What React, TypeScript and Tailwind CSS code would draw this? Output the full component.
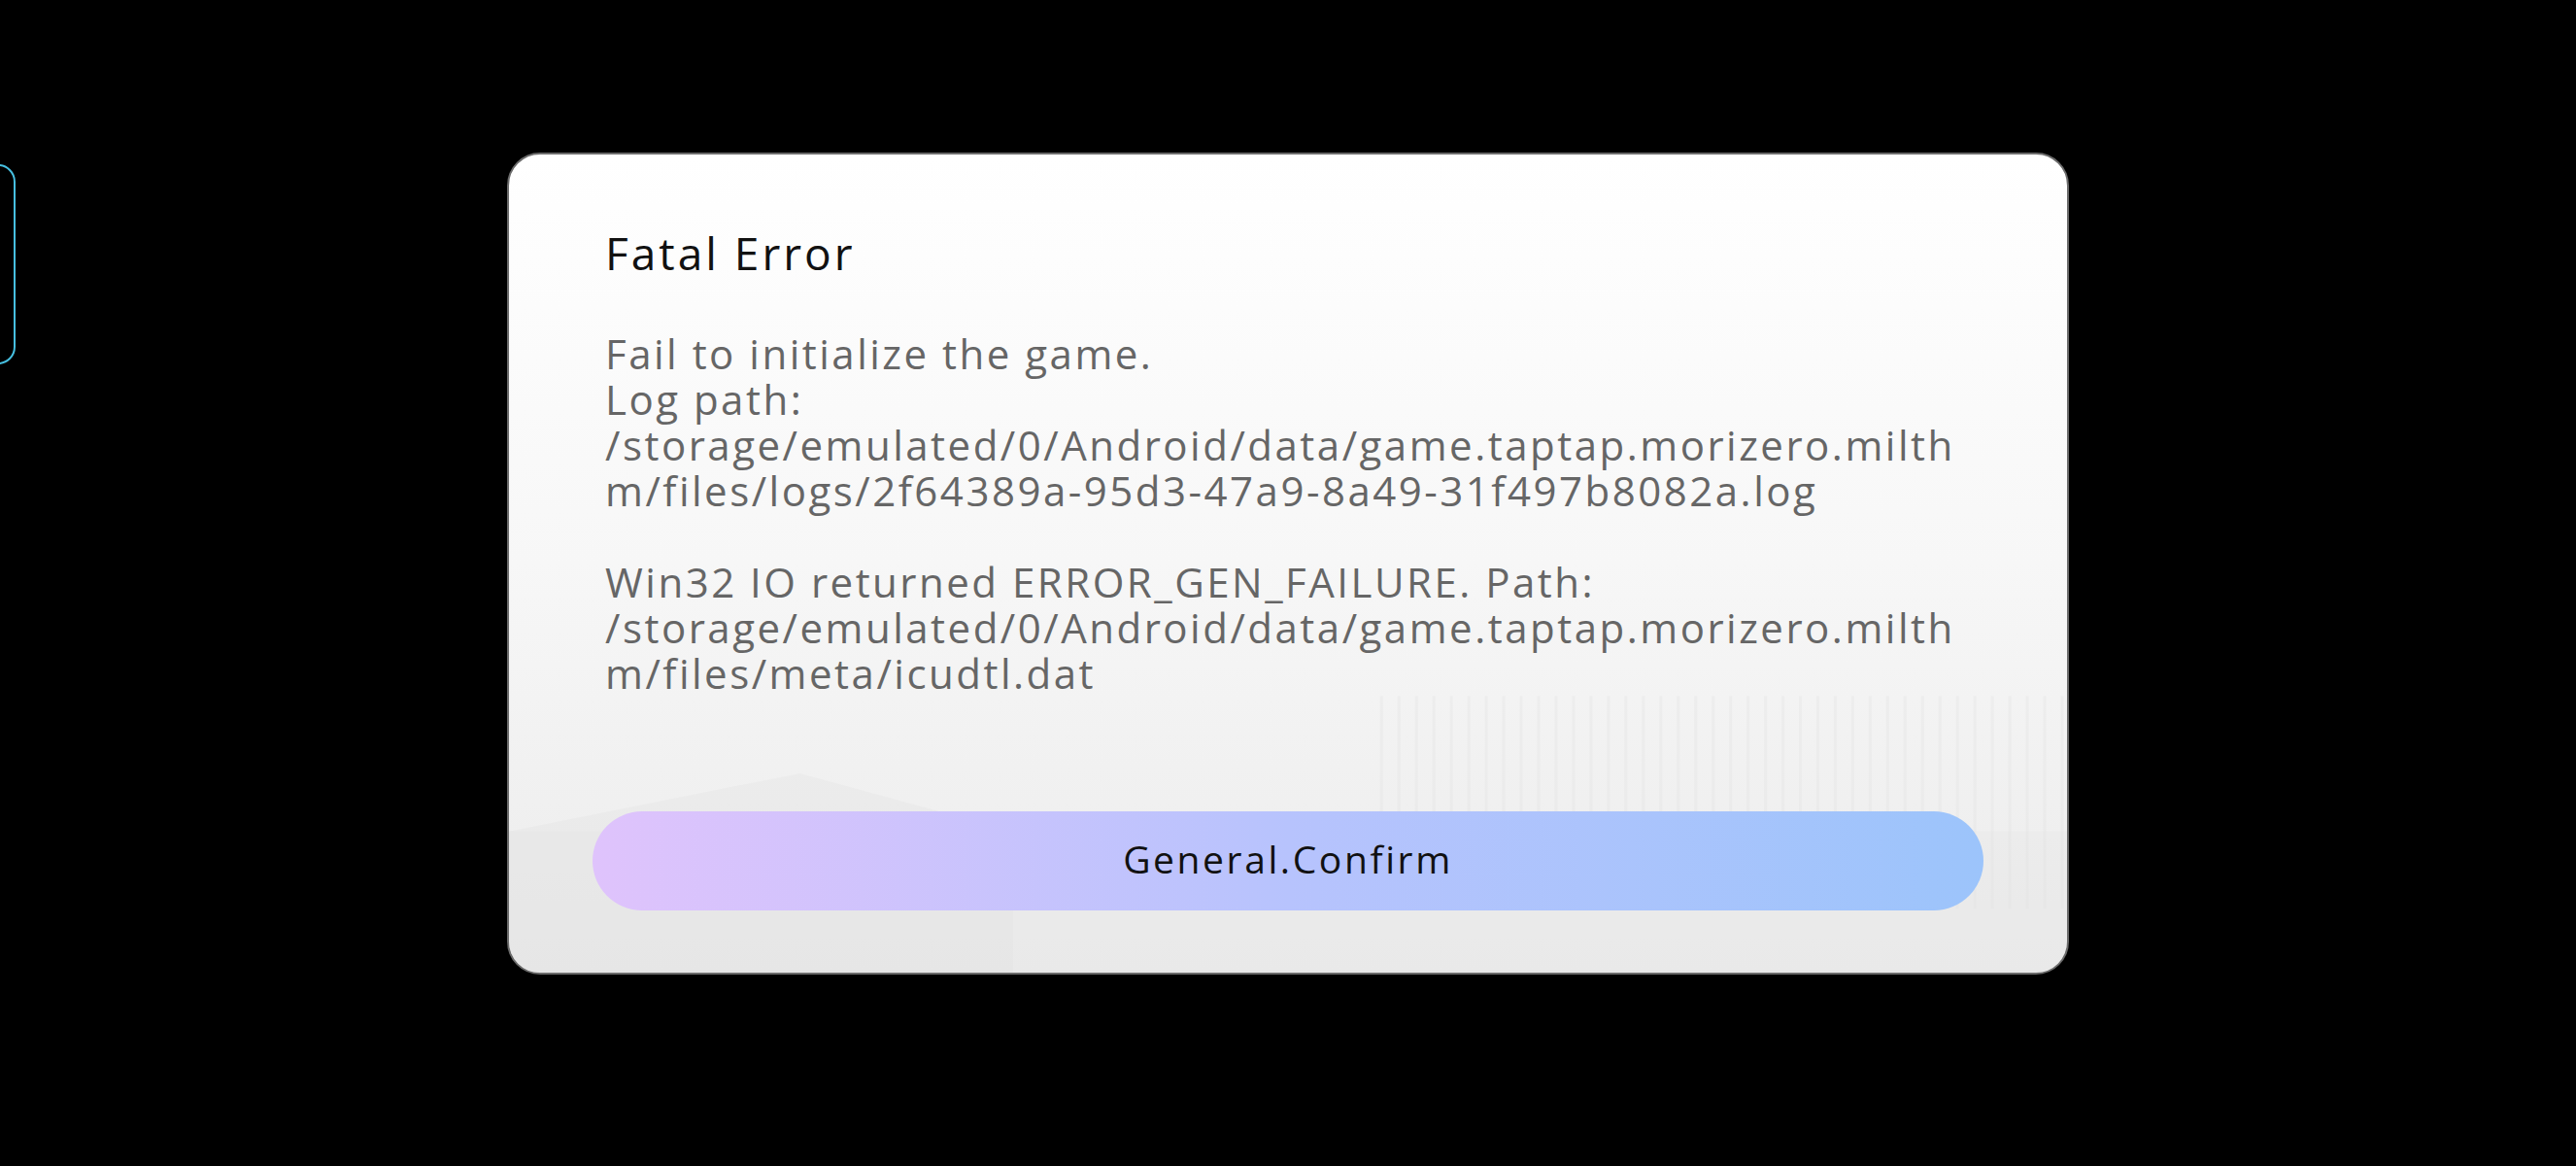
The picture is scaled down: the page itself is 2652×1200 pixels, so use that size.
import React from "react";

const bodyLines1 = [
  "Fail to initialize the game.",
  "Log path:",
  "/storage/emulated/0/Android/data/game.taptap.morizero.milth",
  "m/files/logs/2f64389a-95d3-47a9-8a49-31f497b8082a.log",
];
const bodyLines2 = [
  "Win32 IO returned ERROR_GEN_FAILURE. Path:",
  "/storage/emulated/0/Android/data/game.taptap.morizero.milth",
  "m/files/meta/icudtl.dat",
];

function Backdrop() {
  return (
    <svg
      className="absolute inset-0 h-full w-full pointer-events-none"
      viewBox="0 0 1607 846"
      preserveAspectRatio="none"
    >
      <g stroke="#dedede" strokeWidth="3" opacity="0.25">
        {Array.from({ length: 40 }).map((_, i) => (
          <line key={i} x1={900 + i * 18} y1={560} x2={900 + i * 18} y2={780} />
        ))}
      </g>
      <rect x="0" y="700" width="1607" height="146" fill="#e6e6e6" opacity="0.3" />
      <path d="M0 700 L300 640 L520 700 L520 846 L0 846 Z" fill="#e2e2e2" opacity="0.35" />
    </svg>
  );
}

export default function App() {
  return (
    <div
      className="relative h-[1200px] w-[2652px] overflow-hidden bg-black"
      style={{ fontFamily: '"Open Sans", "Noto Sans", sans-serif' }}
    >
      <div className="absolute left-[-120px] top-[169px] h-[206px] w-[136px] rounded-[18px] border-2 border-[#46bfe0]" />
      <div className="flex justify-center pt-[157px]">
        <div className="relative flex h-[846px] w-[1608px] flex-col overflow-hidden rounded-[34px] border-2 border-[#6b6b6b] bg-gradient-to-b from-[#ffffff] via-[#f7f7f7] to-[#ebebeb] px-[86px] pb-[64px] pt-[71px]">
          <Backdrop />
          <div className="relative pl-[13px]">
            <div className="text-[46px] leading-[60px] tracking-[3px] text-[#111111]">Fatal Error</div>
            <div className="mt-[50px] text-[42px] leading-[47px] tracking-[2.5px] text-[#666666]">
              {bodyLines1.map((l, i) => (
                <div key={i}>{l}</div>
              ))}
              <div className="h-[47px]" />
              {bodyLines2.map((l, i) => (
                <div key={i}>{l}</div>
              ))}
            </div>
          </div>
          <div className="flex-1" />
          <button className="relative flex h-[102px] w-full items-center justify-center rounded-full bg-gradient-to-r from-[#dfc3fc] via-[#b7c3fd] to-[#9cc4fb] pb-[4px] text-[39px] tracking-[2.6px] text-[#111111]">
            General.Confirm
          </button>
        </div>
      </div>
    </div>
  );
}
